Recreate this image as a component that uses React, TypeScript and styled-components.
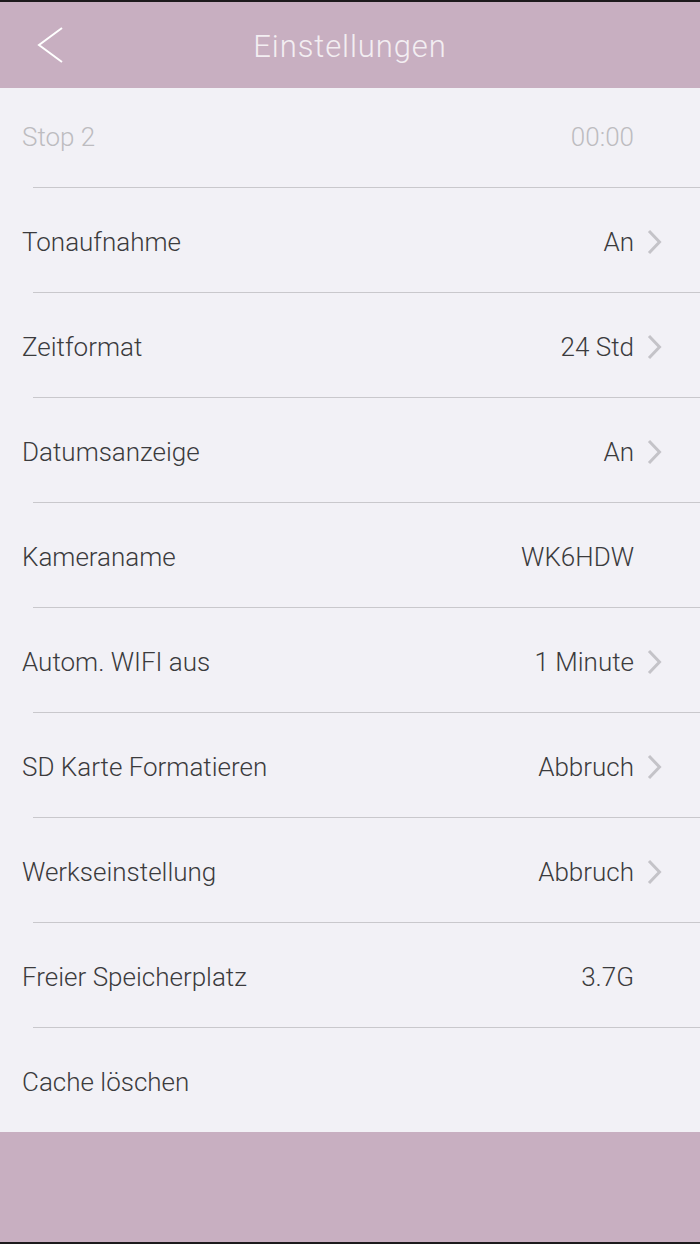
import React from "react";
import styled, { createGlobalStyle } from "styled-components";

const GlobalStyle = createGlobalStyle`
  html, body {
    margin: 0;
    padding: 0;
    background: #1c1a1c;
  }
  body {
    font-family: Roboto, "Liberation Sans", Arial, sans-serif;
  }
`;

const Screen = styled.div`
  width: 700px;
  height: 1240px;
  margin: 2px 0;
  display: flex;
  flex-direction: column;
  background-color: #f2f1f6;
`;

const Header = styled.div`
  height: 86px;
  flex-shrink: 0;
  background-color: #c8afc1;
  display: grid;
  grid-template-columns: 100px 1fr 100px;
  align-items: center;
`;

const BackButton = styled.button`
  border: none;
  background: transparent;
  padding: 0 0 0 36px;
  display: flex;
  align-items: center;
  height: 100%;
  cursor: pointer;
`;

const Title = styled.h1`
  margin: 2px 0 0;
  text-align: center;
  font-weight: 300;
  font-size: 31px;
  color: #f3eef2;
  letter-spacing: 0.9px;
`;

const ListViewport = styled.div`
  flex: 1;
  overflow: hidden;
`;

const List = styled.div`
  margin-top: -5px;
  display: flex;
  flex-direction: column;
`;

const Row = styled.div<{ $dim?: boolean }>`
  height: 105px;
  box-sizing: border-box;
  display: flex;
  align-items: center;
  padding: 4px 38px 0 22px;
  position: relative;
  font-size: 26px;
  font-weight: 300;
  color: ${({ $dim }) => ($dim ? "#bdbcc0" : "#3b3b3d")};
  border-bottom: 1px solid transparent;
  &::after {
    content: "";
    position: absolute;
    left: 33px;
    right: 0;
    bottom: -1px;
    height: 1px;
    background: #c9c8cc;
  }
`;

const Label = styled.span`
  flex: 1;
`;

const Value = styled.span`
  margin-right: 13px;
`;

const Chevron = styled.svg<{ $hidden?: boolean }>`
  width: 15px;
  height: 26px;
  visibility: ${({ $hidden }) => ($hidden ? "hidden" : "visible")};
`;

const Footer = styled.div`
  height: 110px;
  flex-shrink: 0;
  background-color: #c8afc1;
`;

type Item = { label: string; value?: string; arrow?: boolean; dim?: boolean };

const items: Item[] = [
  { label: "Stop 2", value: "00:00", dim: true },
  { label: "Tonaufnahme", value: "An", arrow: true },
  { label: "Zeitformat", value: "24 Std", arrow: true },
  { label: "Datumsanzeige", value: "An", arrow: true },
  { label: "Kameraname", value: "WK6HDW" },
  { label: "Autom. WIFI aus", value: "1 Minute", arrow: true },
  { label: "SD Karte Formatieren", value: "Abbruch", arrow: true },
  { label: "Werkseinstellung", value: "Abbruch", arrow: true },
  { label: "Freier Speicherplatz", value: "3.7G" },
  { label: "Cache löschen" },
];

function App() {
  return (
    <>
      <GlobalStyle />
      <Screen>
        <Header>
          <BackButton>
            <svg width="28" height="38" viewBox="0 0 28 38">
              <path d="M26 2 L3 19 L26 36" fill="none" stroke="#ffffff" strokeWidth="2" />
            </svg>
          </BackButton>
          <Title>Einstellungen</Title>
          <div />
        </Header>
        <ListViewport>
          <List>
            {items.map((item) => (
              <Row key={item.label} $dim={item.dim}>
                <Label>{item.label}</Label>
                {item.value && <Value>{item.value}</Value>}
                <Chevron viewBox="0 0 15 26" $hidden={!item.arrow}>
                  <path d="M2 2 L12.5 13 L2 24" fill="none" stroke="#c4c3c8" strokeWidth="3" />
                </Chevron>
              </Row>
            ))}
          </List>
        </ListViewport>
        <Footer />
      </Screen>
    </>
  );
}

export default App;
